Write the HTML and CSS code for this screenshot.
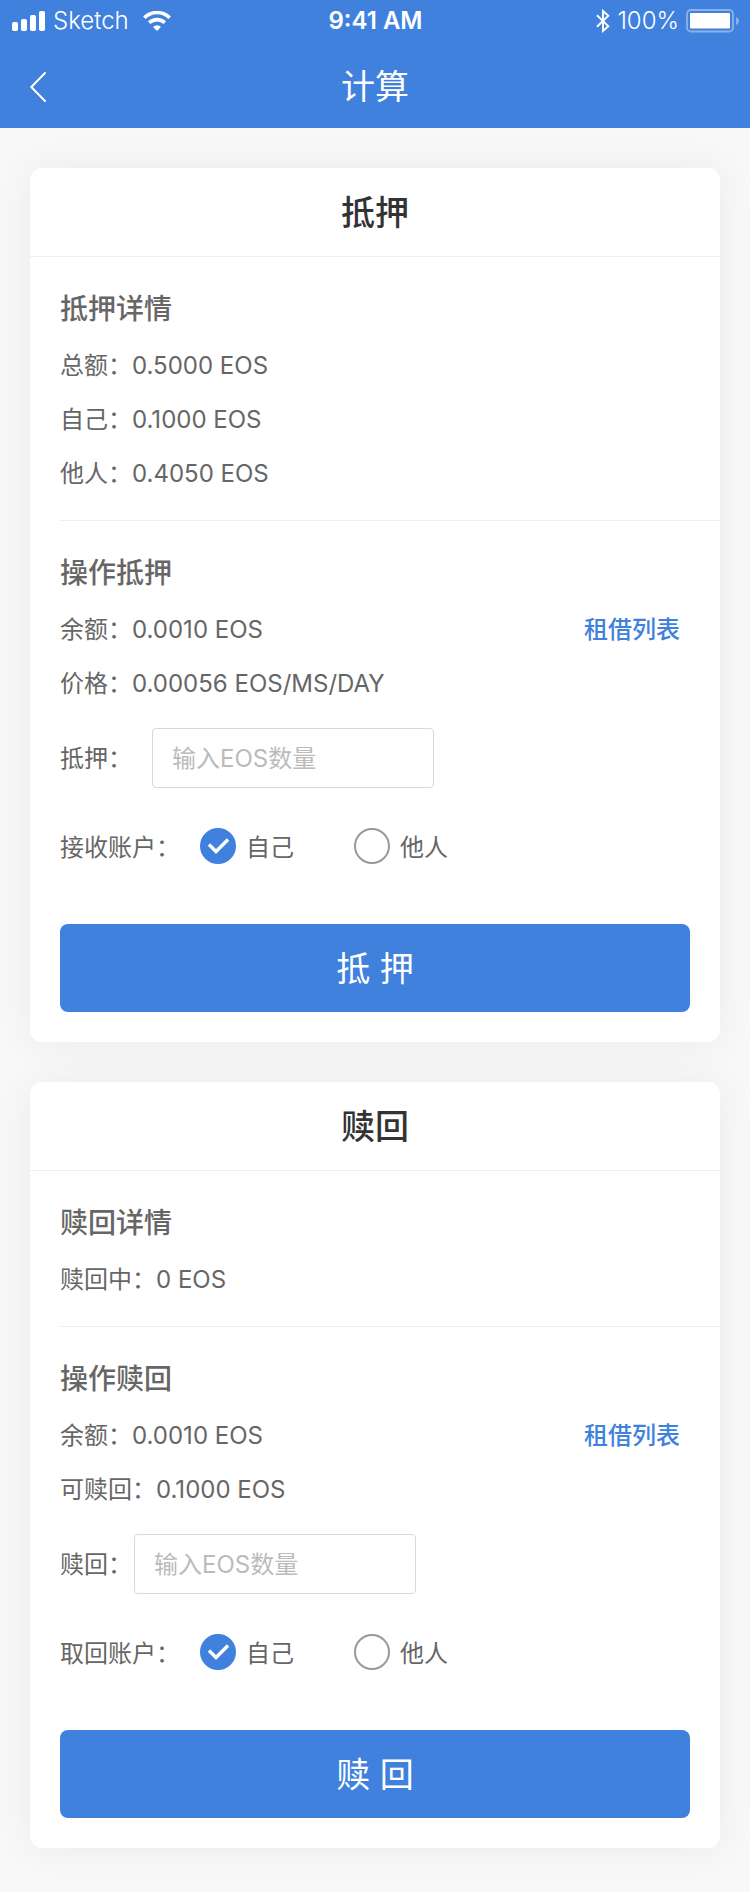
FILE: index.html
```html
<!DOCTYPE html>
<html lang="zh-CN">
<head>
<meta charset="utf-8">
<meta name="viewport" content="width=device-width, initial-scale=1">
<title>计算</title>
<link rel="stylesheet" href="styles.css">
</head>
<body>
<header class="header">
  <div class="status">
    <div class="status-left">
      <svg class="signal" width="33" height="20" viewBox="0 0 33 20" fill="currentColor" aria-hidden="true">
        <rect x="0" y="11" width="6" height="9" rx="1.8"/><rect x="9" y="8" width="6" height="12" rx="1.8"/><rect x="18" y="4" width="6" height="16" rx="1.8"/><rect x="27" y="0" width="6" height="20" rx="1.8"/>
      </svg>
      <span class="carrier">Sketch</span>
      <svg class="wifi" width="28" height="20" viewBox="0 0 28 20" fill="none" stroke="currentColor" aria-hidden="true">
        <path d="M1.3 6.8a18 18 0 0 1 25.4 0" stroke-width="3.6"/>
        <path d="M6.2 11.8a11.1 11.1 0 0 1 15.6 0" stroke-width="3.6"/>
        <path d="M14 20l-4-4.1a5.8 5.8 0 0 1 8 0z" fill="currentColor" stroke="none"/>
      </svg>
    </div>
    <time class="clock">9:41 AM</time>
    <div class="status-right">
      <svg width="14" height="24" viewBox="0 0 14 24" fill="none" stroke="currentColor" stroke-width="1.9" aria-hidden="true">
        <path d="M1 6.3l11.3 11L7 22V2l5.3 4.7L1 17.7"/>
      </svg>
      <span class="percent">100%</span>
      <svg width="53" height="24" viewBox="0 0 53 24" aria-hidden="true">
        <rect x="1" y="1" width="46" height="21.5" rx="4" fill="none" stroke="currentColor" stroke-width="1.8" opacity=".4"/>
        <rect x="4" y="4" width="40" height="15.5" rx="1" fill="currentColor"/>
        <path d="M50 8c4 1.3 4 6.7 0 8z" fill="currentColor" opacity=".4"/>
      </svg>
    </div>
  </div>
  <nav class="nav">
    <button class="back" type="button" aria-label="返回">
      <svg width="16" height="30" viewBox="0 0 16 30" fill="none" stroke="currentColor" stroke-width="2" stroke-linecap="round" stroke-linejoin="round" aria-hidden="true"><path d="M15 1L1.3 15 15 29"/></svg>
    </button>
    <h1 class="nav-title">计算</h1>
  </nav>
</header>

<main class="cards">
  <form class="card">
    <h2 class="card-title">抵押</h2>
    <section class="section">
      <h3 class="section-title">抵押详情</h3>
      <p class="row">总额：0.5000 EOS</p>
      <p class="row">自己：0.1000 EOS</p>
      <p class="row">他人：0.4050 EOS</p>
    </section>
    <section class="section">
      <h3 class="section-title">操作抵押</h3>
      <p class="row">余额：0.0010 EOS <a class="link" href="#">租借列表</a></p>
      <p class="row">价格：0.00056 EOS/MS/DAY</p>
      <div class="field field-wide">
        <label class="field-label" for="stake">抵押：</label>
        <input class="input" id="stake" type="text" placeholder="输入EOS数量">
      </div>
      <div class="choices" role="radiogroup" aria-labelledby="receiver">
        <span class="choices-label" id="receiver">接收账户：</span>
        <label class="choice"><span class="mark"><input class="radio" type="radio" name="receiver" checked><svg class="tick" viewBox="0 0 36 36" aria-hidden="true"><path d="M9 16.5l7 7L28 11.5"/></svg></span><span class="choice-text">自己</span></label>
        <label class="choice"><span class="mark"><input class="radio" type="radio" name="receiver"><svg class="tick" viewBox="0 0 36 36" aria-hidden="true"><path d="M9 16.5l7 7L28 11.5"/></svg></span><span class="choice-text">他人</span></label>
      </div>
      <button class="submit" type="button">抵 押</button>
    </section>
  </form>

  <form class="card">
    <h2 class="card-title">赎回</h2>
    <section class="section">
      <h3 class="section-title">赎回详情</h3>
      <p class="row">赎回中：0 EOS</p>
    </section>
    <section class="section">
      <h3 class="section-title">操作赎回</h3>
      <p class="row">余额：0.0010 EOS <a class="link" href="#">租借列表</a></p>
      <p class="row">可赎回：0.1000 EOS</p>
      <div class="field">
        <label class="field-label" for="redeem">赎回：</label>
        <input class="input" id="redeem" type="text" placeholder="输入EOS数量">
      </div>
      <div class="choices" role="radiogroup" aria-labelledby="owner">
        <span class="choices-label" id="owner">取回账户：</span>
        <label class="choice"><span class="mark"><input class="radio" type="radio" name="owner" checked><svg class="tick" viewBox="0 0 36 36" aria-hidden="true"><path d="M9 16.5l7 7L28 11.5"/></svg></span><span class="choice-text">自己</span></label>
        <label class="choice"><span class="mark"><input class="radio" type="radio" name="owner"><svg class="tick" viewBox="0 0 36 36" aria-hidden="true"><path d="M9 16.5l7 7L28 11.5"/></svg></span><span class="choice-text">他人</span></label>
      </div>
      <button class="submit" type="button">赎 回</button>
    </section>
  </form>
</main>
</body>
</html>
```
FILE: styles.css
```css
* {
  box-sizing: border-box;
}

body {
  margin: 0;
  min-height: 100vh;
  background: #f8f8f8;
  color: #666;
  font: 400 24px/54px Inter, "Noto Sans CJK SC", sans-serif;
}

h1, h2, h3, p {
  margin: 0;
}

button, input {
  font: inherit;
}

.header {
  background: #3f81dd;
  color: #fff;
}

.status {
  display: grid;
  grid-template-columns: 1fr auto 1fr;
  align-items: center;
  height: 42px;
  padding: 0 11px 0 12px;
  line-height: 42px;
}

.status-left,
.status-right {
  display: flex;
  align-items: center;
}

.status-left {
  gap: 8px;
}

.status-right {
  justify-content: flex-end;
  gap: 7px;
}

.carrier,
.percent {
  font-weight: 300;
}

.wifi {
  margin-left: 6px;
}

.clock {
  font-weight: 600;
}

.nav {
  display: grid;
  grid-template-columns: 1fr auto 1fr;
  align-items: center;
  height: 86px;
  padding: 4px 30px 0;
}

.back {
  display: flex;
  justify-self: start;
  padding: 0;
  border: 0;
  background: none;
  color: inherit;
}

.nav-title {
  font-size: 34px;
  font-weight: 400;
}

.cards {
  display: flex;
  flex-direction: column;
  gap: 40px;
  padding: 40px 30px;
}

.card {
  border-radius: 12px;
  background: #fff;
  box-shadow: 0 0 40px rgba(0, 0, 0, 0.06);
}

.card-title {
  padding-top: 2px;
  color: #333;
  font-size: 34px;
  font-weight: 500;
  line-height: 86px;
  text-align: center;
}

.section {
  margin-left: 30px;
  padding: 32px 30px 19px 0;
  border-top: 1px solid #eee;
}

.card-title + .section {
  margin-left: 0;
  padding-left: 30px;
}

.section:last-child {
  padding-bottom: 30px;
}

.section-title {
  margin-bottom: 10px;
  font-size: 28px;
  font-weight: 500;
  line-height: 40px;
}

.row {
  display: flex;
  justify-content: space-between;
}

.link {
  margin-right: 10px;
  color: #3f81dd;
  font-weight: 500;
  text-decoration: none;
}

.field {
  display: flex;
  align-items: center;
  gap: 2px;
  margin: 17px 0 40px;
}

.field-wide {
  gap: 20px;
}

.field-label {
  padding-top: 2px;
}

.input {
  flex: 0 1 282px;
  min-width: 0;
  height: 60px;
  padding: 0 19px;
  border: 1px solid #d8d8df;
  border-radius: 4px;
  background: #fff;
  color: #666;
}

.input::placeholder {
  color: #bbb;
  opacity: 1;
}

.choices {
  display: flex;
  align-items: center;
  gap: 60px;
  margin-bottom: 60px;
  line-height: 32px;
}

.choices-label,
.choice-text {
  padding-top: 4px;
}

.choices-label {
  margin-right: -40px;
}

.choice {
  display: flex;
  align-items: center;
  gap: 10px;
}

.mark {
  display: grid;
}

.radio,
.tick {
  grid-area: 1 / 1;
  width: 36px;
  height: 36px;
}

.radio {
  appearance: none;
  margin: 0;
  border: 2px solid #999;
  border-radius: 50%;
}

.radio:checked {
  border-color: #3f81dd;
  background: #3f81dd;
}

.tick {
  display: none;
  fill: none;
  stroke: #fff;
  stroke-width: 3.4;
  pointer-events: none;
}

.radio:checked + .tick {
  display: block;
}

.submit {
  display: block;
  width: 100%;
  height: 88px;
  padding: 2px 0 0;
  border: 0;
  border-radius: 8px;
  background: #3f81dd;
  color: #fff;
  font-size: 34px;
}
```
